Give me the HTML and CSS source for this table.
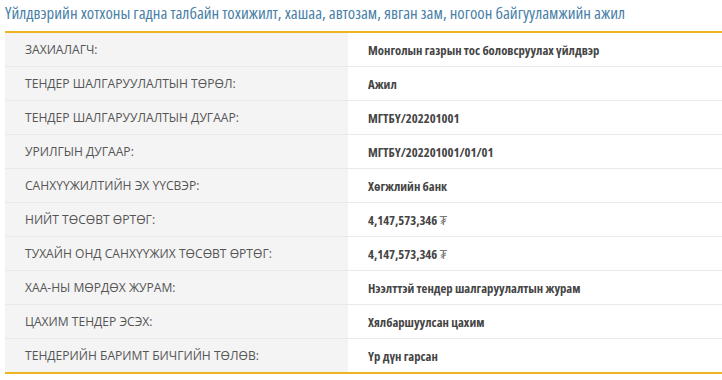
FILE: index.html
```html
<!DOCTYPE html>
<html lang="mn">
<head>
<meta charset="utf-8">
<link rel="stylesheet" href="styles.css">
</head>
<body>
<h1 class="title">Үйлдвэрийн хотхоны гадна талбайн тохижилт, хашаа, автозам, явган зам, ногоон байгууламжийн ажил</h1>
<table class="info">
<tbody>
<tr><th>ЗАХИАЛАГЧ:</th><td>Монголын газрын тос боловсруулах үйлдвэр</td></tr>
<tr><th>ТЕНДЕР ШАЛГАРУУЛАЛТЫН ТӨРӨЛ:</th><td>Ажил</td></tr>
<tr><th>ТЕНДЕР ШАЛГАРУУЛАЛТЫН ДУГААР:</th><td>МГТБҮ/202201001</td></tr>
<tr><th>УРИЛГЫН ДУГААР:</th><td>МГТБҮ/202201001/01/01</td></tr>
<tr><th>САНХҮҮЖИЛТИЙН ЭХ ҮҮСВЭР:</th><td>Хөгжлийн банк</td></tr>
<tr><th>НИЙТ ТӨСӨВТ ӨРТӨГ:</th><td>4,147,573,346 <span class="cur">₮</span></td></tr>
<tr><th>ТУХАЙН ОНД САНХҮҮЖИХ ТӨСӨВТ ӨРТӨГ:</th><td>4,147,573,346 <span class="cur">₮</span></td></tr>
<tr><th>ХАА-НЫ МӨРДӨХ ЖУРАМ:</th><td>Нээлттэй тендер шалгаруулалтын журам</td></tr>
<tr><th>ЦАХИМ ТЕНДЕР ЭСЭХ:</th><td>Хялбаршуулсан цахим</td></tr>
<tr><th>ТЕНДЕРИЙН БАРИМТ БИЧГИЙН ТӨЛӨВ:</th><td>Үр дүн гарсан</td></tr>
</tbody>
</table>
</body>
</html>
```
FILE: styles.css
```css
html, body {
  margin: 0;
  padding: 0;
  background: #ffffff;
}
body {
  font-family: "Open Sans", "Liberation Sans", sans-serif;
  font-stretch: 75%;
  padding: 0 0 0 5px;
}
.title {
  margin: 0;
  height: 29px;
  font-size: 16.8px;
  font-weight: normal;
  color: #4a7fa8;
  line-height: 26px;
  white-space: nowrap;
}
.info {
  width: 717px;
  border-collapse: collapse;
  border-top: 2px solid #f0b323;
  border-bottom: 2px solid #f0b323;
  margin-top: 2px;
}
.info th,
.info td {
  height: 33px;
  padding: 0 20px;
  text-align: left;
  border-bottom: 1px solid #e9e9e9;
  color: #555555;
}
.info tr:last-child th,
.info tr:last-child td {
  border-bottom: none;
}
.info th {
  width: 303px;
  background: #f4f4f4;
  font-weight: normal;
  font-size: 12.1px;
  font-stretch: 92%;
}
.info td {
  font-weight: bold;
  color: #454545;
  font-size: 12.7px;
}
.cur {
  font-weight: normal;
  color: #777;
}
```
